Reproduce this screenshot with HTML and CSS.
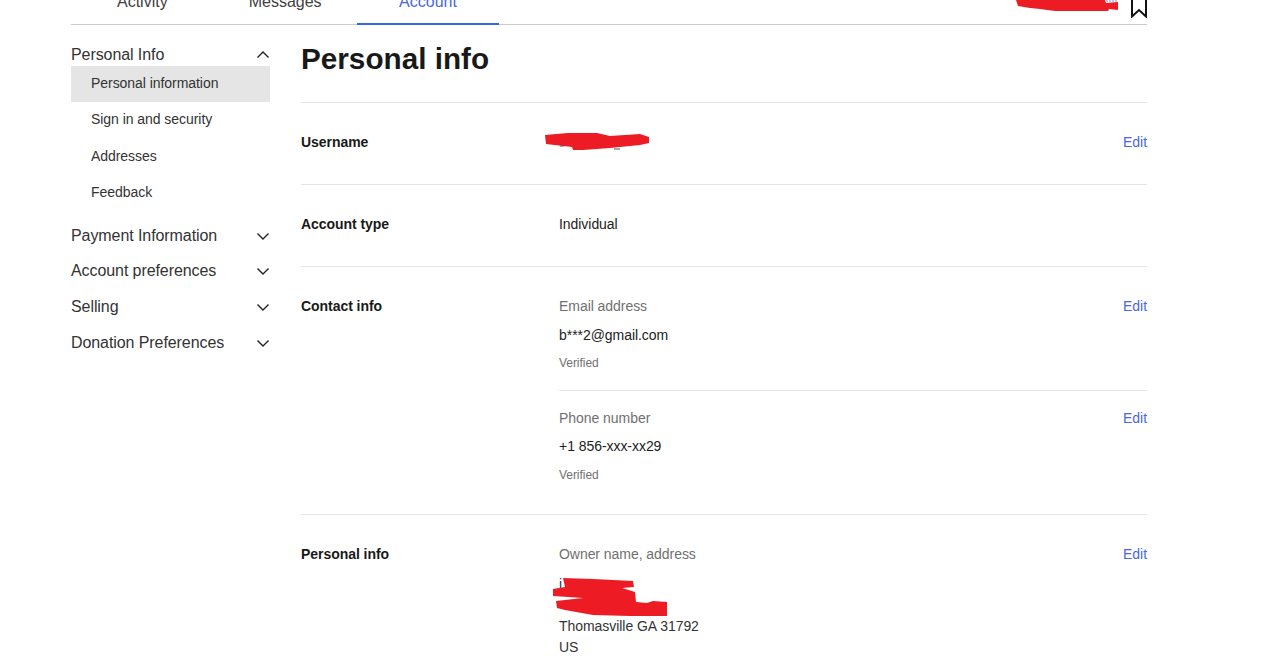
FILE: index.html
```html
<!DOCTYPE html>
<html lang="en">
<head>
<meta charset="utf-8">
<title>Personal info</title>
<link rel="stylesheet" href="styles.css">
</head>
<body>
<div class="page">
  <nav class="tabs">
    <a class="tab">Activity</a>
    <a class="tab">Messages</a>
    <a class="tab tab-active">Account</a>
    <svg class="bookmark" width="16" height="26" viewBox="0 0 16 26"><path d="M1 1V24.5L8 18L15 24.5V1Z" fill="none" stroke="#111" stroke-width="2"/></svg>
  </nav>
  <div class="layout">
    <aside class="side">
      <div class="group-head group-open"><span>Personal Info</span>
        <svg class="chev" width="14" height="8" viewBox="0 0 14 8"><path d="M1.5 6.5L7 1L12.5 6.5" fill="none" stroke="#222" stroke-width="1.4"/></svg>
      </div>
      <ul class="items">
        <li class="item item-on">Personal information</li>
        <li class="item">Sign in and security</li>
        <li class="item">Addresses</li>
        <li class="item">Feedback</li>
      </ul>
      <div class="group-head"><span>Payment Information</span>
        <svg class="chev" width="14" height="8" viewBox="0 0 14 8"><path d="M1.5 1.5L7 7L12.5 1.5" fill="none" stroke="#222" stroke-width="1.4"/></svg>
      </div>
      <div class="group-head"><span>Account preferences</span>
        <svg class="chev" width="14" height="8" viewBox="0 0 14 8"><path d="M1.5 1.5L7 7L12.5 1.5" fill="none" stroke="#222" stroke-width="1.4"/></svg>
      </div>
      <div class="group-head"><span>Selling</span>
        <svg class="chev" width="14" height="8" viewBox="0 0 14 8"><path d="M1.5 1.5L7 7L12.5 1.5" fill="none" stroke="#222" stroke-width="1.4"/></svg>
      </div>
      <div class="group-head"><span>Donation Preferences</span>
        <svg class="chev" width="14" height="8" viewBox="0 0 14 8"><path d="M1.5 1.5L7 7L12.5 1.5" fill="none" stroke="#222" stroke-width="1.4"/></svg>
      </div>
    </aside>
    <main class="main">
      <h1 class="title">Personal info</h1>
      <section class="row">
        <div class="label">Username</div>
        <div class="value"><div class="line">&nbsp;</div></div>
        <a class="edit">Edit</a>
      </section>
      <section class="row">
        <div class="label">Account type</div>
        <div class="value"><div class="line">Individual</div></div>
      </section>
      <section class="row">
        <div class="label">Contact info</div>
        <div class="stack">
          <div class="entry">
            <div class="value">
              <div class="line muted">Email address</div>
              <div class="line gap-wide">b***2@gmail.com</div>
              <div class="line spaced small">Verified</div>
            </div>
            <a class="edit">Edit</a>
          </div>
          <div class="entry entry-next">
            <div class="value">
              <div class="line muted">Phone number</div>
              <div class="line spaced">+1 856-xxx-xx29</div>
              <div class="line gap-wide small">Verified</div>
            </div>
            <a class="edit">Edit</a>
          </div>
        </div>
      </section>
      <section class="row">
        <div class="label">Personal info</div>
        <div class="value">
          <div class="line muted">Owner name, address</div>
          <div class="address">
            <div>i</div>
            <div>&nbsp;</div>
            <div>Thomasville GA 31792</div>
            <div>US</div>
          </div>
        </div>
        <a class="edit">Edit</a>
      </section>
    </main>
  </div>
</div>
<svg class="redactions" width="1280" height="671" viewBox="0 0 1280 671" aria-hidden="true">
  <path class="ink" d="M1016 0L1018 6L1030 8L1040 9L1055 11L1108 11L1109 9L1118 10L1118 2L1106 3L1105 0Z"/>
  <path class="scrap-blue" d="M1107 0V2M1110 0V2M1113 0V2M1116 0V2"/>
  <path class="ink" d="M545 135L568 133L597 133L610 136L640 134L649 137L649 143L640 145L610 148L583 150L573 150L572 147L546 144Z"/>
  <path class="ink" d="M563 578L593 579L633 581L634 587L622 588L635 592L636 602L647 603L653 601L667 602L667 616L630 616L593 615L565 610L557 608L556 601L583 598L553 596L553 589L565 587Z"/>
  <path class="scrap" d="M614 149H620M560 146H564"/>
</svg>
</body>
</html>
```

FILE: styles.css
```css
* { box-sizing: border-box; }
html, body { margin: 0; padding: 0; height: 671px; overflow: hidden; background: #fff; }
body { position: relative; font-family: "Liberation Sans", Arial, sans-serif; font-size: 14px; letter-spacing: -0.05px; color: #222; }
.page { width: 1076px; margin: -20px 0 0 71px; }

.tabs { display: flex; height: 45px; border-bottom: 1px solid #ccc; }
.tab { padding: 12px 35px 0 46px; height: 45px; font-size: 16px; line-height: 20px; letter-spacing: 0; color: #41413f; }
.tab-active { padding: 12px 42.5px 0; color: #4a68dc; border-bottom: 2px solid #3665f3; }
.bookmark { margin-left: auto; margin-top: 12px; }

.layout { display: flex; gap: 31px; }
.side { width: 199px; flex: none; padding-top: 18px; }
.group-head { display: flex; justify-content: space-between; align-items: center; height: 24px; font-size: 16px; letter-spacing: -0.08px; color: #333; margin-bottom: 11.67px; }
.group-open { margin-bottom: -1px; }
.chev { flex: none; }
.items { list-style: none; margin: 0 0 12.1px; padding: 0; }
.item { height: 36.5px; line-height: 35px; padding-left: 20px; color: #333; }
.item-on { background: #e5e5e5; height: 36px; }

.main { flex: 1; min-width: 0; }
.title { margin: 0; padding-top: 16px; height: 77px; font-size: 29.7px; line-height: 36px; font-weight: 700; letter-spacing: 0; color: #191919; }
.row { display: flex; align-items: flex-start; min-height: 82px; padding: 29px 0; border-top: 1px solid #e5e5e5; }
.label { width: 258px; flex: none; line-height: 20px; font-weight: 700; color: #191919; }
.value { flex: 1; min-width: 0; }
.line { line-height: 20px; }
.spaced { margin-top: 8px; }
.gap-wide { margin-top: 9px; }
.muted { color: #707070; }
.small { font-size: 12px; color: #707070; }
.edit { line-height: 20px; color: #4a68dc; }
.stack { flex: 1; min-width: 0; }
.entry { display: flex; align-items: flex-start; }
.entry-next { margin-top: 17px; padding-top: 17px; border-top: 1px solid #e5e5e5; }
.address { margin-top: 10px; line-height: 21px; color: #333; }

.redactions { position: absolute; left: 0; top: 0; pointer-events: none; }
.ink { fill: #ed1c24; }
.scrap { stroke: #555; stroke-width: 1; fill: none; }
.scrap-blue { stroke: #6f86e0; stroke-width: 1; fill: none; }
```
